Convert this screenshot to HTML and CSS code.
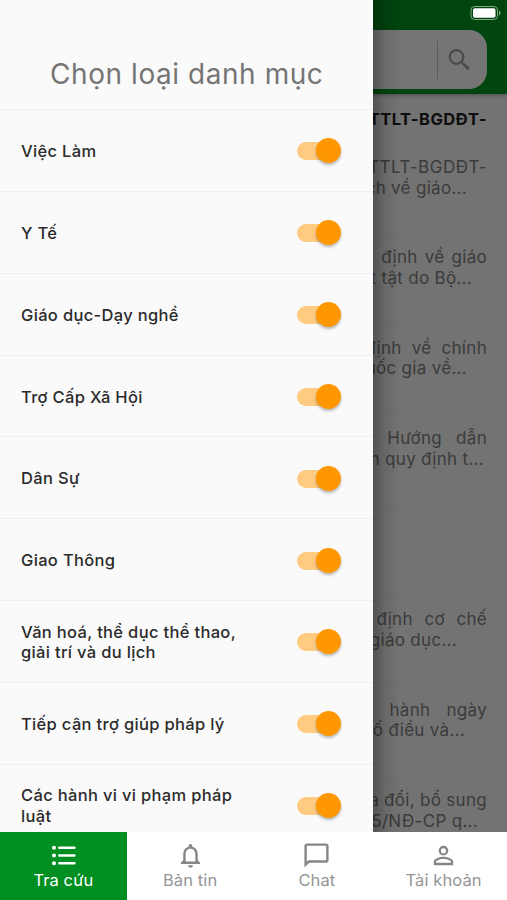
FILE: index.html
```html
<!DOCTYPE html>
<html lang="vi">
<head>
    <meta charset="UTF-8">
    <meta name="viewport" content="width=device-width, initial-scale=1.0">
    <title>Chọn loại danh mục</title>
    <link rel="stylesheet" href="styles.css">
</head>
<body>
    <div class="screen">
        <main class="page">
            <header class="header">
                <div class="search">
                    <span class="search-line"></span>
                    <svg class="search-icon" viewBox="0 0 30 30"><circle cx="12.500" cy="12" r="6.800"/><path d="M17.500 17l2 2"/><path class="handle" d="M19.300 18.800l5.500 5.500"/></svg>
                </div>
            </header>
            <section class="results">
                <article class="result first">
                    <h2>TTLT-BGDĐT-</h2>
                    <p class="code">TTLT-BGDĐT-</p>
                    <p class="end-21">ch về giáo...</p>
                </article>
                <article class="result">
                    <p class="wide-5">y định về giáo</p>
                    <p class="end-16">t tật do Bộ...</p>
                </article>
                <article class="result">
                    <p class="wide-9">định về chính</p>
                    <p class="end-21">uốc gia về...</p>
                </article>
                <article class="result">
                    <p class="wide-14">Hướng dẫn</p>
                    <p class="end-4">m quy định t...</p>
                </article>
                <article class="result"></article>
                <article class="result">
                    <p class="wide-10">định cơ chế</p>
                    <p class="end-31">giáo dục...</p>
                </article>
                <article class="result">
                    <p class="wide-16">hành ngày</p>
                    <p class="end-23">ố điều và...</p>
                </article>
                <article class="result">
                    <p>a đổi, bổ sung</p>
                    <p class="end-10">5/NĐ-CP q...</p>
                </article>
            </section>
        </main>

        <div class="overlay"></div>

        <svg class="battery" viewBox="0 0 32 16">
            <rect x="1" y="1.500" width="26.500" height="13" rx="3.500" fill="none" stroke="#80a886"/>
            <rect x="3" y="3.300" width="22.500" height="9.400" rx="1.800" fill="#fff"/>
            <path d="M29 5.500c2 .7 2 4.300 0 5z" fill="#80a886"/>
        </svg>

        <aside class="drawer">
            <h1>Chọn loại danh mục</h1>
            <ul class="categories">
                <li><span>Việc Làm</span><i class="switch"></i></li>
                <li><span>Y Tế</span><i class="switch"></i></li>
                <li><span>Giáo dục-Dạy nghề</span><i class="switch"></i></li>
                <li><span>Trợ Cấp Xã Hội</span><i class="switch"></i></li>
                <li><span>Dân Sự</span><i class="switch"></i></li>
                <li><span>Giao Thông</span><i class="switch"></i></li>
                <li><span>Văn hoá, thể dục thể thao,<br>giải trí và du lịch</span><i class="switch"></i></li>
                <li><span>Tiếp cận trợ giúp pháp lý</span><i class="switch"></i></li>
                <li><span>Các hành vi vi phạm pháp<br>luật</span><i class="switch"></i></li>
            </ul>
        </aside>

        <nav class="tabs">
            <a class="tab active">
                <svg viewBox="0 0 28 28"><g fill="none" stroke="currentColor" stroke-width="2.500" stroke-linecap="round"><path d="M10 6.500h14.500M10 14h14.500M10 21.500h14.500"/><path d="M4.800 6.500h.1M4.800 14h.1M4.800 21.500h.1" stroke-width="3.800"/></g></svg>
                <span>Tra cứu</span>
            </a>
            <a class="tab">
                <svg viewBox="0 0 24 24"><path fill="currentColor" d="M12 22c1.100 0 2-.9 2-2h-4c0 1.100.9 2 2 2zm6-6v-5c0-3.070-1.630-5.640-4.500-6.320V4a1.500 1.500 0 0 0-3 0v.68C7.640 5.360 6 7.920 6 11v5l-2 2v1h16v-1zm-2 1H8v-6c0-2.480 1.510-4.500 4-4.500s4 2.020 4 4.500z"/></svg>
                <span>Bản tin</span>
            </a>
            <a class="tab">
                <svg viewBox="0 0 24 24"><path fill="currentColor" d="M20 2H4c-1.100 0-2 .9-2 2v18l4-4h14c1.100 0 2-.9 2-2V4c0-1.100-.9-2-2-2zm0 14H5.200L4 17.200V4h16z"/></svg>
                <span>Chat</span>
            </a>
            <a class="tab">
                <svg viewBox="0 0 24 24"><path fill="currentColor" d="M12 5.900a2.100 2.100 0 1 1 0 4.200 2.100 2.100 0 0 1 0-4.200m0 9c2.970 0 6.100 1.460 6.100 2.100v1.100H5.900V17c0-.64 3.130-2.100 6.100-2.100M12 4a4 4 0 1 0 0 8 4 4 0 0 0 0-8zm0 9c-2.670 0-8 1.340-8 4v3h16v-3c0-2.660-5.330-4-8-4z"/></svg>
                <span>Tài khoản</span>
            </a>
        </nav>
    </div>
</body>
</html>
```
FILE: styles.css
```css
* { box-sizing: border-box; margin: 0; padding: 0; }
body { font-family: Inter, "Noto Sans", sans-serif; background: #fff; }
.screen { position: relative; width: 507px; height: 900px; overflow: hidden; display: flex; flex-direction: column; }

/* search page behind the drawer */
.page { height: 831.5px; background: #fafafa; overflow: hidden; }
.header { height: 94px; padding: 30px 20px 5px; background: #009420; box-shadow: 0 1px 4px rgba(0,0,0,.35); }
.search { height: 59px; background: #fff; border-radius: 18px; display: flex; align-items: center; justify-content: flex-end; padding-right: 13px; gap: 6px; }
.search-line { width: 1px; height: 38px; background: #c8c8c8; }
.search-icon { width: 30px; height: 30px; fill: none; stroke: #a0a0a0; stroke-width: 2.2; }
.search-icon .handle { stroke-width: 3; }
.results { padding: 0 20px 0 340px; }
.result { height: 90.5px; padding-top: 13px; border-bottom: 1px solid #f4f4f4; display: flex; flex-direction: column; align-items: flex-end; }
.first { height: 140px; padding-top: 15px; }
.result h2 { font-size: 16.5px; line-height: 21px; letter-spacing: .5px; margin-bottom: 27px; color: #202020; white-space: nowrap; }
.result p { font-size: 17px; line-height: 20.7px; letter-spacing: .3px; color: #828282; white-space: nowrap; }
.result .code { letter-spacing: .5px; }
.wide-5 { word-spacing: 2px; }
.wide-9 { word-spacing: 5px; }
.wide-10 { word-spacing: 6.5px; }
.wide-14 { word-spacing: 9px; }
.wide-16 { word-spacing: 11px; }
.end-4 { margin-right: 3px; }
.end-10 { margin-right: 9px; }
.end-16 { margin-right: 15px; }
.end-21 { margin-right: 20px; }
.end-23 { margin-right: 22px; }
.end-31 { margin-right: 30px; }
.overlay { position: absolute; top: 0; left: 0; width: 507px; height: 831.5px; background: rgba(0,0,0,.54); }
.overlay::after { content: ""; position: absolute; top: 0; left: 372px; width: 28px; height: 100%; background: linear-gradient(to right, rgba(0,0,0,.3), rgba(0,0,0,.1) 45%, transparent); }
.battery { position: absolute; top: 5px; right: 5px; width: 32px; height: 16px; }

/* drawer */
.drawer { position: absolute; top: 0; left: 0; width: 372.5px; height: 831.5px; overflow: hidden; background: #fafafa; }
.drawer h1 { height: 110px; padding: 56px 0 0 1px; border-bottom: 1px solid #f0f0f0; font-size: 28px; line-height: 36px; font-weight: 400; letter-spacing: .55px; color: #757575; text-align: center; white-space: nowrap; }
.categories { list-style: none; }
.categories li { height: 81.85px; padding: 2px 30px 0 21px; border-bottom: 1px solid #f0f0f0; display: flex; align-items: center; justify-content: space-between; font-size: 16.5px; line-height: 20.7px; font-weight: 500; letter-spacing: .33px; color: #2b2b2b; white-space: nowrap; }
.switch { position: relative; width: 46px; height: 18px; border-radius: 9px; background: linear-gradient(to right, #ffcb80 40px, transparent 40px); }
.switch::after { content: ""; position: absolute; right: 2px; top: -4px; width: 25px; height: 25px; border-radius: 50%; background: #ff9800; box-shadow: 0 2px 3px rgba(0,0,0,.28); }

/* bottom tabs */
.tabs { height: 68.5px; display: flex; background: #fff; }
.tab { flex: 1; display: flex; flex-direction: column; align-items: center; padding-top: 9.5px; color: #959595; font-size: 16.5px; line-height: 21px; letter-spacing: .1px; }
.tab svg { width: 29px; height: 29px; color: #868686; }
.active { background: #008f20; }
.active, .active svg { color: #fff; }
```
